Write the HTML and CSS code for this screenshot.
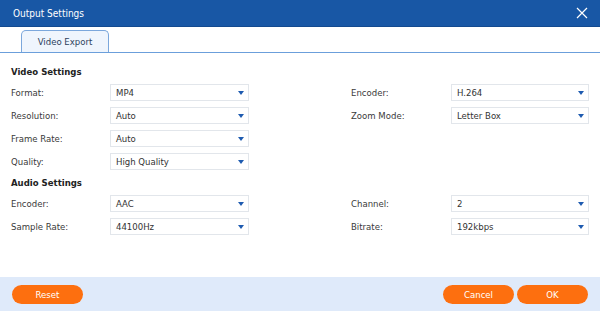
FILE: index.html
```html
<!DOCTYPE html>
<html>
<head>
<meta charset="utf-8">
<link rel="stylesheet" href="styles.css">
</head>
<body>
<div class="dialog">
  <div class="titlebar">
    <span class="title">Output Settings</span>
    <svg class="close" width="12" height="12" viewBox="0 0 12 12"><path d="M1 1L11 11M11 1L1 11" stroke="#fff" stroke-width="1.2" fill="none"/></svg>
  </div>
  <div class="tabs">
    <div class="tab">Video Export</div>
  </div>
  <div class="content">
    <div class="heading">Video Settings</div>
    <div class="grid">
      <div class="label">Format:</div>
      <div class="select">MP4<span class="arrow"></span></div>
      <div class="label rl">Encoder:</div>
      <div class="select">H.264<span class="arrow"></span></div>

      <div class="label">Resolution:</div>
      <div class="select">Auto<span class="arrow"></span></div>
      <div class="label rl">Zoom Mode:</div>
      <div class="select">Letter Box<span class="arrow"></span></div>

      <div class="label">Frame Rate:</div>
      <div class="select">Auto<span class="arrow"></span></div>

      <div class="label">Quality:</div>
      <div class="select">High Quality<span class="arrow"></span></div>
    </div>
    <div class="heading second">Audio Settings</div>
    <div class="grid">
      <div class="label">Encoder:</div>
      <div class="select">AAC<span class="arrow"></span></div>
      <div class="label rl">Channel:</div>
      <div class="select">2<span class="arrow"></span></div>

      <div class="label">Sample Rate:</div>
      <div class="select">44100Hz<span class="arrow"></span></div>
      <div class="label rl">Bitrate:</div>
      <div class="select">192kbps<span class="arrow"></span></div>
    </div>
  </div>
  <div class="footer">
    <button class="btn">Reset</button>
    <div class="spacer"></div>
    <button class="btn">Cancel</button>
    <button class="btn">OK</button>
  </div>
</div>
</body>
</html>
```

FILE: styles.css
```css
html, body {
  margin: 0;
  padding: 0;
  background: #fff;
}
body {
  font-family: "DejaVu Sans Condensed", "Liberation Sans", Arial, sans-serif;
  font-size: 9.5px;
  color: #3a3a3a;
}
.dialog {
  width: 600px;
  height: 311px;
  display: flex;
  flex-direction: column;
}
.titlebar {
  height: 26px;
  background: #1857a5;
  border-bottom: 1px solid #134a8f;
  display: flex;
  align-items: center;
  padding: 0 13px;
  justify-content: space-between;
}
.title {
  color: #fff;
  font-size: 10px;
}
.close {
  margin-right: -1px;
}
.tabs {
  height: 25px;
  display: flex;
  align-items: flex-end;
  padding-left: 21px;
  border-bottom: 1px solid #6b9fdb;
}
.tab {
  width: 86px;
  height: 21px;
  border: 1px solid #7ba7dc;
  border-bottom: none;
  border-radius: 5px 5px 0 0;
  background: #eff5fd;
  display: flex;
  align-items: center;
  justify-content: center;
  color: #2c3f5c;
  font-size: 9.5px;
}
.content {
  flex: 1;
  padding: 12px 11px 0 11px;
}
.heading {
  font-weight: bold;
  color: #222;
  height: 14px;
  line-height: 14px;
  margin-bottom: 5px;
}
.heading.second {
  margin-top: 6px;
}
.grid {
  display: grid;
  grid-template-columns: 99px 139px 102px 100px 138px;
  grid-auto-rows: 17px;
  row-gap: 6px;
}
.label {
  display: flex;
  align-items: center;
  grid-column: 1;
}
.label.rl {
  grid-column: 4;
}
.select {
  box-sizing: border-box;
  border: 1px solid #e2e6eb;
  background: #fff;
  display: flex;
  align-items: center;
  padding-left: 5px;
  color: #333;
  position: relative;
}
.arrow {
  position: absolute;
  right: 4px;
  top: 6px;
  width: 0;
  height: 0;
  border-left: 3.5px solid transparent;
  border-right: 3.5px solid transparent;
  border-top: 4px solid #1e5bb0;
}
.footer {
  height: 34px;
  background: #dfeafa;
  display: flex;
  align-items: center;
  padding: 0 12px;
  gap: 3px;
}
.spacer {
  flex: 1;
}
.btn {
  width: 71px;
  height: 19px;
  border: none;
  border-radius: 10px;
  background: #fd6f0f;
  color: #fff;
  font-family: "DejaVu Sans Condensed", "Liberation Sans", Arial, sans-serif;
  font-size: 9.5px;
  padding: 0;
}
```
